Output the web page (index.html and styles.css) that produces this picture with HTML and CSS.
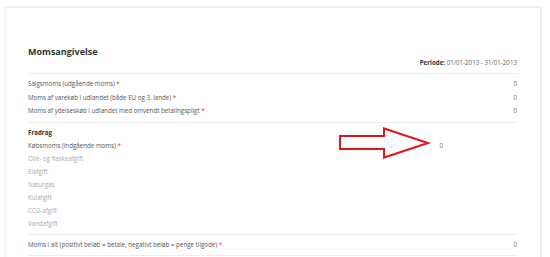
FILE: index.html
```html
<!DOCTYPE html>
<html lang="da">
<head>
    <meta charset="UTF-8">
    <title>Momsangivelse</title>
    <link rel="stylesheet" href="styles.css">
</head>
<body>
    <div class="card">
        <div class="card-header">
            <h1>Momsangivelse</h1>
            <p class="period"><b>Periode:</b> 01/01-2013 - 31/01-2013</p>
        </div>

        <div class="section sales">
            <div class="row"><span>Salgsmoms (udgående moms) <i>*</i></span><span class="value">0</span></div>
            <div class="row"><span>Moms af varekøb i udlandet (både EU og 3. lande) <i>*</i></span><span class="value">0</span></div>
            <div class="row"><span>Moms af ydelseskøb i udlandet med omvendt betalingspligt <i>*</i></span><span class="value">0</span></div>
        </div>

        <div class="section">
            <div class="row heading"><span>Fradrag</span></div>
            <div class="row"><span>Købsmoms (indgående moms) <i>*</i></span><span class="value indented">0</span></div>
            <div class="row muted"><span>Olie- og flaskeafgift</span></div>
            <div class="row muted"><span>Elafgift</span></div>
            <div class="row muted"><span>Naturgas</span></div>
            <div class="row muted"><span>Kulafgift</span></div>
            <div class="row muted"><span>CO2-afgift</span></div>
            <div class="row muted"><span>Vandafgift</span></div>
        </div>

        <div class="section">
            <div class="row"><span>Moms i alt (positivt beløb = betale, negativt beløb = penge tilgode) <i>*</i></span><span class="value">0</span></div>
        </div>

        <!-- red arrow pointing at the purchase VAT value -->
        <svg class="arrow" width="94" height="33" viewBox="0 0 94 33">
            <polygon points="2,9 46,9 46,1.5 90,16 46,30.5 46,22 2,22" fill="#fff" stroke="#e8141c" stroke-width="2"/>
        </svg>
    </div>
</body>
</html>
```

FILE: styles.css
```css
* {
    box-sizing: border-box;
    margin: 0;
    padding: 0;
}

body {
    font-family: "Open Sans", Arial, sans-serif;
    background-color: #fff;
    color: #555;
    padding: 7px 9px 0 5px;
}

.card {
    position: relative;
    border: 1px solid #ececec;
    border-bottom: none;
    box-shadow: 1px 0 1px rgba(0, 0, 0, 0.06), -1px -1px 1px rgba(0, 0, 0, 0.04);
    padding: 0 23px 0 22px;
    min-height: 260px;
}

.card-header {
    padding-top: 37px;
    border-bottom: 1px solid #eee;
}

h1 {
    font-size: 9px;
    font-weight: 700;
    color: #333;
    line-height: 13px;
}

.period {
    text-align: right;
    font-size: 6.2px;
    line-height: 10px;
    padding-bottom: 5px;
    color: #666;
}

.period b {
    color: #333;
}

.section {
    border-bottom: 1px solid #eee;
    padding: 3px 0 4px;
}

.row {
    display: flex;
    justify-content: space-between;
    font-size: 6.2px;
    line-height: 13px;
}

.sales .row {
    line-height: 13.5px;
}

.row i {
    font-style: normal;
    color: #e53935;
}

.heading {
    font-weight: 700;
    color: #333;
}

.muted {
    color: #aaa;
}

.value {
    color: #777;
}

.value.indented {
    padding-right: 74px;
}

.arrow {
    position: absolute;
    left: 332px;
    top: 119px;
}
```
